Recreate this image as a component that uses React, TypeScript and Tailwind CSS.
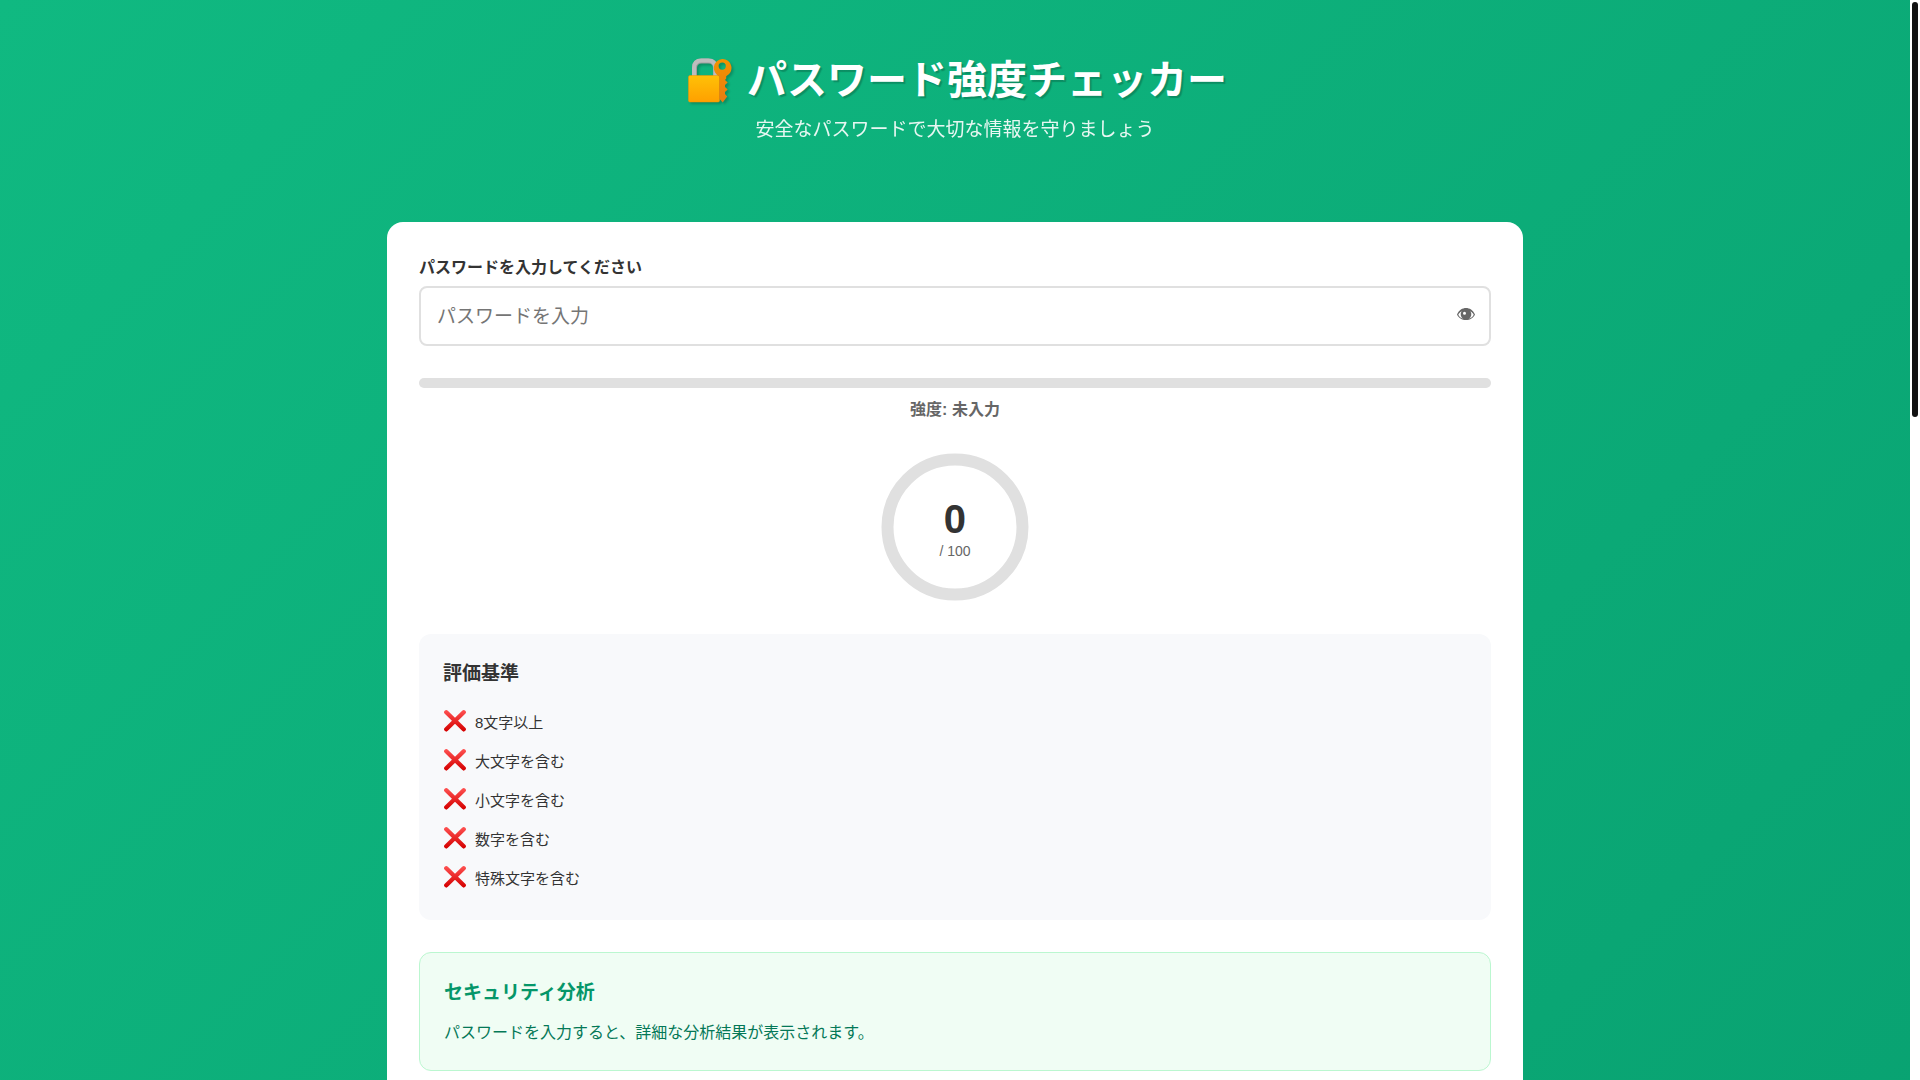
import { useEffect, useRef, useState } from "react";

const CRITERIA = [
  { id: "length", label: "8文字以上", test: (v: string) => v.length >= 8 },
  { id: "upper", label: "大文字を含む", test: (v: string) => /[A-Z]/.test(v) },
  { id: "lower", label: "小文字を含む", test: (v: string) => /[a-z]/.test(v) },
  { id: "digit", label: "数字を含む", test: (v: string) => /[0-9]/.test(v) },
  { id: "symbol", label: "特殊文字を含む", test: (v: string) => /[^A-Za-z0-9]/.test(v) },
];

const LEVELS = ["弱い", "弱い", "やや弱い", "普通", "強い", "非常に強い"];

const RADIUS = 67.5;
const CIRCUMFERENCE = 2 * Math.PI * RADIUS;

export default function App() {
  const [password, setPassword] = useState("");
  const [visible, setVisible] = useState(false);

  const passed = CRITERIA.filter((c) => c.test(password)).length;
  const score = passed * 20;
  const level = password ? LEVELS[passed] : "未入力";

  return (
    <ScrollPage>
      <header className="pt-12 pb-8 text-center text-white">
        <h1 className="flex items-center justify-center gap-3 text-[40px] leading-[64px] font-bold [text-shadow:2px_2px_1px_rgba(0,0,0,0.2)]">
          <LockIcon />
          パスワード強度チェッカー
        </h1>
        <p className="mt-1 text-[19px] leading-7 opacity-90">安全なパスワードで大切な情報を守りましょう</p>
      </header>

      <main className="mx-auto max-w-[1200px] px-8 pt-[46px]">
        <div className="rounded-2xl bg-white p-8">
          <label htmlFor="password" className="block pb-1 text-base leading-7 font-semibold">
            パスワードを入力してください
          </label>
          <div className="relative">
            <input
              id="password"
              type={visible ? "text" : "password"}
              value={password}
              onChange={(e) => setPassword(e.target.value)}
              placeholder="パスワードを入力"
              className="block h-[60px] w-full rounded-lg border-2 border-[#e0e0e0] pt-0.5 pr-14 pl-4 text-[19px] outline-none placeholder:text-[#757575] focus:border-emerald-500"
            />
            <button
              type="button"
              aria-label="パスワードの表示切り替え"
              onClick={() => setVisible(!visible)}
              className="absolute inset-y-0 right-4 text-[#666]"
            >
              <EyeIcon />
            </button>
          </div>

          <div className="mt-8 h-[10px] overflow-hidden rounded-full bg-[#e0e0e0]">
            <div className="h-full bg-emerald-500" style={{ width: `${score}%` }} />
          </div>
          <p className="mt-2 text-center text-base leading-7 font-bold text-[#666]">強度: {level}</p>

          <ScoreRing score={score} />

          <section className="mt-8 rounded-xl bg-[#f8f9fb] p-6">
            <h2 className="mb-3 text-[19px] leading-[31px] font-bold">評価基準</h2>
            <ul>
              {CRITERIA.map((c) => (
                <li key={c.id} className="flex items-end gap-2 py-2">
                  {c.test(password) ? <CheckIcon /> : <CrossIcon />}
                  <span className="text-[15px] leading-[19px]">{c.label}</span>
                </li>
              ))}
            </ul>
          </section>

          <section className="mt-8 rounded-xl border border-[#bbf7d0] bg-[#f0fdf4] p-6">
            <h2 className="mb-3 text-[19px] leading-[31px] font-bold text-[#059669]">セキュリティ分析</h2>
            <p className="text-base leading-[26px] text-[#047857]">
              パスワードを入力すると、詳細な分析結果が表示されます。
            </p>
          </section>
        </div>
      </main>
    </ScrollPage>
  );
}

function ScoreRing({ score }: { score: number }) {
  return (
    <div className="flex justify-center pt-7">
      <div className="grid place-items-center *:col-start-1 *:row-start-1">
        <svg width="150" height="150" viewBox="0 0 150 150" className="-rotate-90" aria-hidden="true">
          <circle cx="75" cy="75" r={RADIUS} fill="none" stroke="#e0e0e0" strokeWidth="12" />
          {score > 0 && (
            <circle
              cx="75"
              cy="75"
              r={RADIUS}
              fill="none"
              stroke="#10b981"
              strokeWidth="12"
              strokeDasharray={CIRCUMFERENCE}
              strokeDashoffset={CIRCUMFERENCE * (1 - score / 100)}
            />
          )}
        </svg>
        <div className="pt-2 text-center">
          <div className="text-[40px] leading-10 font-bold">{score}</div>
          <div className="text-sm leading-6 text-[#666]">/ 100</div>
        </div>
      </div>
    </div>
  );
}

function LockIcon() {
  return (
    <svg
      width="52"
      height="52"
      viewBox="0 2 52 52"
      className="shrink-0 drop-shadow-[2px_2px_1px_rgba(0,0,0,0.2)]"
      aria-hidden="true"
    >
      <defs>
        <linearGradient id="lock-body" x1="0" y1="0" x2="0" y2="1">
          <stop offset="0" stopColor="#ffc107" />
          <stop offset="1" stopColor="#ffa000" />
        </linearGradient>
        <linearGradient id="lock-key" x1="0" y1="0" x2="0" y2="1">
          <stop offset="0" stopColor="#f39200" />
          <stop offset="1" stopColor="#e67c12" />
        </linearGradient>
      </defs>
      <path d="M11.500 25V16q0-7 7-7h7q7 0 7 7v9" fill="none" stroke="#9e9e9e" strokeWidth="5" />
      <path d="M11 25V16q0-7.500 7.500-7.500h6.500q7.500 0 7.500 7.500v9" fill="none" stroke="#bdbdbd" strokeWidth="4" />
      <rect x="5.500" y="23.500" width="31" height="26.500" rx="1.500" fill="url(#lock-body)" stroke="#f59300" strokeWidth="0.500" />
      <path
        fill="url(#lock-key)"
        fillRule="evenodd"
        transform="translate(0.700 0)"
        d="M38.500 7a9 9 0 0 1 4 17.200v2.300l-1.200 1.500 2.700 2.500-2.700 2.500v2l2.700 2.500-2.700 2.500v2l2.200 2.500-4.500 6-3.500-4V24.200a9 9 0 0 1 3-17.200ZM38.500 10.500a3.600 3.600 0 1 0 0 7.200 3.600 3.600 0 0 0 0-7.200Z"
      />
    </svg>
  );
}

function EyeIcon() {
  return (
    <svg width="18" height="16" viewBox="0 0 18 16" aria-hidden="true">
      <path
        fill="currentColor"
        fillRule="evenodd"
        d="M0 6.500C2 2 5.500 0 9 0s7 2 9 6.500C16.500 10 13 12 9 12S1.500 10 0 6.500ZM4.600 3.200C3 4.200 1.800 5.500 1.300 6.700c.8 1.800 2.500 3.200 4.700 4A5.400 5.400 0 0 1 4.600 3.200ZM13.400 3.200a5.400 5.400 0 0 1-1.400 7.500c2.200-.8 3.900-2.200 4.700-4-.5-1.200-1.700-2.500-3.300-3.500ZM7.500 3.700a1.500 1.500 0 1 0 0 3 1.500 1.500 0 0 0 0-3Z"
      />
    </svg>
  );
}

function CrossIcon() {
  return (
    <svg width="24" height="23" viewBox="0 0 24 23" aria-label="未達成">
      <defs>
        <linearGradient id="cross-red" gradientUnits="userSpaceOnUse" x1="0" y1="1" x2="0" y2="22">
          <stop offset="0" stopColor="#ff5252" />
          <stop offset="1" stopColor="#d50000" />
        </linearGradient>
      </defs>
      <path
        d="M3.300 3.300 20.700 20.300M20.700 3.300 3.300 20.300"
        stroke="url(#cross-red)"
        strokeWidth="4.400"
        strokeLinecap="round"
      />
    </svg>
  );
}

function CheckIcon() {
  return (
    <svg width="24" height="23" viewBox="0 0 24 23" aria-label="達成">
      <rect x="1" y="1" width="22" height="21" rx="3" fill="#43a047" />
      <path d="m6 12 4 4 8-9" fill="none" stroke="#fff" strokeWidth="3" strokeLinecap="round" />
    </svg>
  );
}

/** Scrolling page with its own slim scrollbar on the right edge. */
function ScrollPage({ children }: { children: React.ReactNode }) {
  const ref = useRef<HTMLDivElement>(null);
  const [thumb, setThumb] = useState({ top: 0, height: 100 });

  const update = () => {
    const el = ref.current;
    if (!el) return;
    setThumb({
      top: (el.scrollTop / el.scrollHeight) * 100,
      height: (el.clientHeight / el.scrollHeight) * 100,
    });
  };

  useEffect(() => {
    update();
    window.addEventListener("resize", update);
    return () => window.removeEventListener("resize", update);
  }, []);

  return (
    <div className="flex h-screen bg-white font-['Liberation_Sans','Noto_Sans_CJK_JP',sans-serif] text-[#333]">
      <div ref={ref} onScroll={update} className="min-w-0 flex-1 overflow-y-auto [scrollbar-width:none]">
        <div className="min-h-[259vh] bg-[linear-gradient(135deg,#10b981_0%,#059669_100%)]">{children}</div>
      </div>
      <div className="w-[10px] p-0.5">
        <div className="relative h-full">
          <div
            className="absolute inset-x-0 rounded-full bg-[#111]"
            style={{ top: `${thumb.top}%`, height: `${thumb.height}%` }}
          />
        </div>
      </div>
    </div>
  );
}
